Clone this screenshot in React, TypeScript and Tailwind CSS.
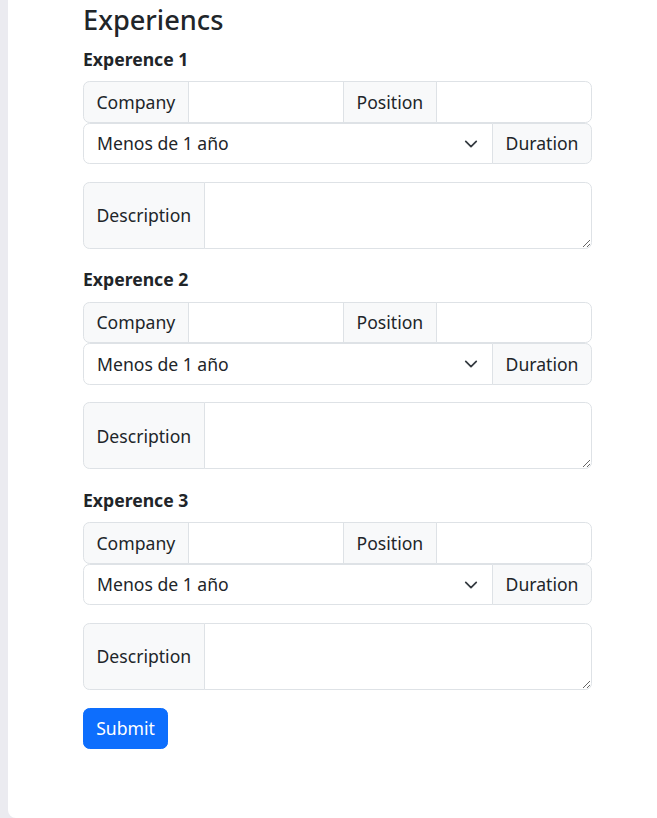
import React from "react";

const addon =
  "flex items-center px-[12.5px] py-[6.6px] bg-[#f8f9fa] border border-[#dee2e6] text-[#212529] leading-[26.4px] whitespace-nowrap";
const field =
  "min-w-0 flex-1 px-[13px] py-[6.6px] bg-white border border-[#dee2e6] text-[#212529] leading-[26.4px] outline-none";

function Section({ n }: { n: number }) {
  return (
    <div>
      <label className="block font-bold text-[17.6px] leading-[26.4px] mb-[8.8px] text-[#212529]">
        Experence {n}
      </label>
      <div className="flex">
        <span className={addon + " rounded-l-[6.6px]"}>Company</span>
        <input className={field + " -ml-px"} type="text" />
        <span className={addon + " -ml-px"}>Position</span>
        <input className={field + " -ml-px rounded-r-[6.6px]"} type="text" />
      </div>
      <div className="flex mb-[17.6px]">
        <div className="relative flex-1 min-w-0 flex">
          <select
            className={
              field +
              " appearance-none pr-[39.6px] rounded-l-[6.6px] w-full"
            }
            defaultValue="0"
          >
            <option value="0">Menos de 1 año</option>
            <option value="1">1 año</option>
            <option value="2">2 años</option>
          </select>
          <svg
            className="absolute right-[15px] top-[14px] pointer-events-none"
            width="14"
            height="14"
            viewBox="0 0 16 16"
            fill="none"
            stroke="#343a40"
            strokeWidth="2"
            strokeLinecap="round"
            strokeLinejoin="round"
          >
            <path d="m2 5 6 6 6-6" />
          </svg>
        </div>
        <span className={addon + " -ml-px rounded-r-[6.6px] pl-[13px]"}>Duration</span>
      </div>
      <div className="flex mb-[17.6px]">
        <span className={addon + " rounded-l-[6.6px]"}>Description</span>
        <textarea
          className={field + " -ml-px rounded-r-[6.6px] h-[67px] block"}
          rows={2}
        />
      </div>
    </div>
  );
}

export default function App() {
  return (
    <div
      className="flex h-[818px] overflow-hidden bg-[#ebebf0]"
      style={{ fontFamily: '"Noto Sans", "Open Sans", sans-serif' }}
    >
      <div className="ml-[8px] flex-1 bg-white rounded-bl-[8px] text-[17.6px] text-[#212529]">
        <div className="ml-[75px] w-[509px] pt-[2px]">
          <h2 className="text-[27.2px] leading-[35px] font-medium mb-[8.8px]">
            Experiencs
          </h2>
          <Section n={1} />
          <Section n={2} />
          <Section n={3} />
          <button className="px-[12.2px] py-[6.6px] leading-[26.4px] bg-[#0d6efd] text-white border border-[#0d6efd] rounded-[6.6px]">
            Submit
          </button>
        </div>
      </div>
    </div>
  );
}
